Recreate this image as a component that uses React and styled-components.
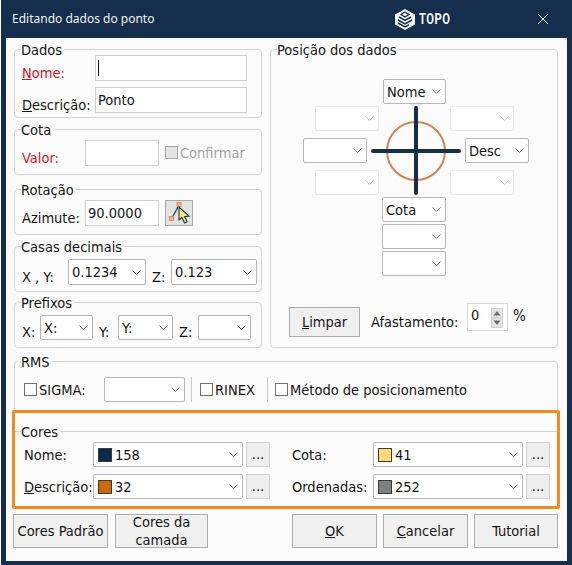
import React from "react";
import styled, { createGlobalStyle } from "styled-components";

const Global = createGlobalStyle`
  html, body { margin: 0; padding: 0; background: #fff; }
  body { font-family: "DejaVu Sans Condensed", "Noto Sans", "Liberation Sans", sans-serif; font-size: 14.5px; color: #151515; }
  * { box-sizing: border-box; }
`;

const Win = styled.div`
  width: 571px;
  height: 565px;
  margin-left: 1px;
  background: #162e4d;
  padding: 0 5px 4px 5px;
  display: flex;
  flex-direction: column;
  overflow: hidden;
`;

const TitleBar = styled.div`
  height: 38px;
  flex: none;
  display: flex;
  align-items: center;
  color: #eef1f4;
`;

const TitleText = styled.div`
  font-family: "Noto Sans", sans-serif;
  font-size: 12px;
  margin-left: 6px;
  width: 382px;
  padding-bottom: 1px;
`;

const LogoText = styled.div`
  font-family: "Roboto", sans-serif;
  font-weight: 700;
  font-size: 14px;
  letter-spacing: 0.6px;
  margin-left: 3px;
  width: 118px;
  color: #f2f4f6;
  transform: scaleX(0.8);
  transform-origin: left center;
`;

const Body = styled.div`
  flex: 1;
  background: #fbfbfb;
  padding: 11px 9px 0 8px;
`;

const Top = styled.div`
  display: flex;
  gap: 8px;
`;

const LeftCol = styled.div`
  width: 248px;
  display: flex;
  flex-direction: column;
`;

const Group = styled.div`
  position: relative;
  border: 1px solid #d4d4d4;
  border-radius: 4px;
  height: ${p => p.$h}px;
  margin-top: ${p => p.$mt || 0}px;
  padding: ${p => p.$pad};
`;

const Caption = styled.div`
  position: absolute;
  top: -9px;
  left: 6px;
  padding-right: 2px;
  background: #fbfbfb;
  line-height: 18px;
`;

const Row = styled.div`
  display: flex;
  align-items: flex-end;
  margin-top: ${p => p.$mt || 0}px;
`;

const Label = styled.div`
  width: ${p => p.$w}px;
  margin-left: ${p => p.$ml || 0}px;
  margin-bottom: -1px;
  flex: none;
  line-height: 18px;
  white-space: nowrap;
  color: ${p => (p.$red ? "#d3141c" : "inherit")};
`;

const Input = styled.div`
  width: ${p => p.$w}px;
  height: 26px;
  flex: none;
  background: #fff;
  border: 1px solid #cfcfcf;
  padding: 0 2px;
  line-height: 25px;
  white-space: nowrap;
`;

const Caret = styled.span`
  display: inline-block;
  width: 1px;
  height: 16px;
  margin-top: 4px;
  background: #111;
`;

const Box = styled.span`
  width: 13px;
  height: 13px;
  margin-top: -1px;
  flex: none;
  border: 1px solid ${p => (p.$off ? "#a8a8a8" : "#707070")};
  background: ${p => (p.$off ? "#e4e4e4" : "#fff")};
`;

const Check = styled.div`
  display: flex;
  align-items: center;
  gap: 2px;
  height: 25px;
  padding-top: 1px;
  flex: none;
  width: ${p => (p.$w ? `${p.$w}px` : "auto")};
  margin-left: ${p => p.$ml || 0}px;
  margin-bottom: ${p => p.$mb || 0}px;
  color: ${p => (p.$off ? "#a3a3a3" : "inherit")};
`;

const ComboBox = styled.div`
  width: ${p => p.$w}px;
  height: ${p => p.$h || 25}px;
  margin-left: ${p => p.$ml || 0}px;
  flex: none;
  display: flex;
  align-items: center;
  gap: 3px;
  background: #fff;
  border: 1px solid ${p => (p.$off ? "#e8e8e8" : "#b6b6b6")};
  border-radius: 2px;
  padding: 0 0 0 3px;
  overflow: hidden;
  grid-column: ${p => p.$col || "auto"};
  grid-row: ${p => p.$row || "auto"};
`;

const ComboText = styled.span`
  flex: 1;
  white-space: nowrap;
`;

const Swatch = styled.span`
  width: 14px;
  height: 14px;
  margin-left: 1px;
  flex: none;
  border: 1px solid #3a3a3a;
  background: ${p => p.$color};
`;

const Chevron = styled.svg`
  width: 9px;
  height: 5px;
  margin: 0 4px 0 0;
  flex: none;
  fill: none;
  stroke: ${p => (p.$off ? "#c4c4c4" : "#6f6f6f")};
  stroke-width: 1;
`;

const Combo = ({ text, color, off, ...rest }) => (
  <ComboBox $off={off} {...rest}>
    {color && <Swatch $color={color} />}
    <ComboText>{text}</ComboText>
    <Chevron $off={off} viewBox="0 0 9 5">
      <path d="M0.5 0.5 L4.5 4.5 L8.5 0.5" />
    </Chevron>
  </ComboBox>
);

const PickButton = styled.div`
  width: 28px;
  height: 26px;
  margin-left: 6px;
  flex: none;
  background: #e2e2e2;
  border: 1px solid #a8a8a8;
`;

const PositionGroup = styled(Group)`
  flex: 1;
  display: flex;
  flex-direction: column;
  padding: 29px 0 0 32px;
`;

const Dial = styled.div`
  display: grid;
  grid-template-columns: 12px 52px 12px 71px 15px 49px 15px;
  grid-template-rows: repeat(3, 25px);
  row-gap: 7px;
  margin-top: 2px;
`;

const Cross = styled.svg`
  grid-column: 3 / 6;
  grid-row: 1 / 4;
  width: 98px;
  height: 89px;
`;

const Stack = styled.div`
  display: flex;
  flex-direction: column;
  gap: 2px;
  margin: 2px 0 0 79px;
`;

const PositionFoot = styled.div`
  display: flex;
  align-items: flex-start;
  margin: 31px 0 0 -14px;
`;

const FootLabel = styled(Label)`
  margin-top: 6px;
`;

const Spin = styled.div`
  width: 41px;
  height: 28px;
  margin: -4px 0 0 8px;
  background: #fff;
  border: 1px solid #d8d8d8;
  display: flex;
  justify-content: space-between;
  padding: 0 4px 0 3px;
  line-height: 22px;
`;

const SpinArrows = styled.svg`
  width: 12px;
  height: 20px;
  margin-top: 4px;
`;

const PercentText = styled.div`
  margin: 0 0 0 5px;
  font-size: 15px;
  line-height: 18px;
`;

const Divider = styled.div`
  width: 1px;
  height: 25px;
  margin-left: ${p => p.$ml}px;
  flex: none;
  background: #c8c8c8;
`;

const RmsGroup = styled(Group)`
  border-bottom: none;
  border-radius: 4px 4px 0 0;
`;

const Highlight = styled.div`
  height: 99px;
  margin: 0 -2px;
  border: 3px solid #f28c1e;
  border-radius: 2px;
  padding-top: 18px;
`;

const CoresBody = styled.div`
  position: relative;
  border-top: 1px solid #d4d4d4;
  padding: 10px 0 0 9px;
`;

const CoresGrid = styled.div`
  display: grid;
  grid-template-columns: 246px 258px;
  column-gap: 22px;
  row-gap: 7px;
`;

const ColorField = styled.div`
  display: flex;
  align-items: center;
`;

const DotsButton = styled.div`
  width: 24px;
  height: 25px;
  margin-left: 3px;
  flex: none;
  background: #efefef;
  border: 1px solid #d2d2d2;
  text-align: center;
  line-height: 23px;
`;

const Actions = styled.div`
  display: flex;
  gap: 7px;
  margin: 5px 0 0 -1px;
  width: 545px;
`;

const ActionPair = styled.div`
  display: flex;
  gap: 6px;
  margin-left: auto;
`;

const Btn = styled.div`
  width: ${p => p.$w}px;
  height: ${p => p.$h || 34}px;
  flex: none;
  display: flex;
  align-items: center;
  justify-content: center;
  text-align: center;
  line-height: 18px;
  background: #f0f0f0;
  border: 1px solid #adadad;
`;

const colorFields = [
  { label: <span>Nome:</span>, w: 69, color: "#0b2a4c", text: "158" },
  { label: <span>Cota:</span>, w: 81, color: "#fdd778", text: "41" },
  { label: <span><u>D</u>escrição:</span>, w: 69, color: "#cc6a00", text: "32" },
  { label: <span>Ordenadas:</span>, w: 81, color: "#808080", text: "252" },
];

const Logo = () => (
  <svg width="22" height="23" viewBox="0 0 22 23" style={{ flex: "none" }}>
    <path d="M11 1 L21 6.5 L21 16.5 L11 22 L1 16.5 L1 6.5 Z" fill="#f4f5f6" />
    <path d="M11 4 L15 6.5 L11 9 L7 6.5 Z" fill="none" stroke="#162e4d" strokeWidth="1.3" />
    <path d="M5 9 L11 12.5 L17 9 M4 12 L11 16 L18 12 M4 15 L11 19 L15 16.8" fill="none" stroke="#162e4d" strokeWidth="1.5" />
  </svg>
);

const CloseIcon = () => (
  <svg width="12" height="12" viewBox="0 0 12 12" style={{ flex: "none" }}>
    <path d="M1 1 L11 11 M11 1 L1 11" stroke="#e8ecf0" strokeWidth="1" />
  </svg>
);

const PickIcon = () => (
  <svg width="26" height="24" viewBox="0 0 26 24">
    <path d="M6 17 L13 4" stroke="#33465c" strokeWidth="1.4" fill="none" />
    <rect x="3.5" y="15.5" width="4" height="4" fill="#f2b48c" stroke="#d98050" strokeWidth="0.8" />
    <rect x="11" y="1.5" width="4" height="4" fill="#f2b48c" stroke="#d98050" strokeWidth="0.8" />
    <path d="M13 6 L13 19 L16 16.5 L18.5 22 L21 20.8 L18.6 15.6 L23 15 Z" fill="#f0ee78" stroke="#24384f" strokeWidth="1.1" />
  </svg>
);

export default function App() {
  return (
    <>
      <Global />
      <Win>
        <TitleBar>
          <TitleText>Editando dados do ponto</TitleText>
          <Logo />
          <LogoText>TOPO</LogoText>
          <CloseIcon />
        </TitleBar>
        <Body>
          <Top>
            <LeftCol>
              <Group $h={69} $pad="5px 0 0 7px">
                <Caption>Dados</Caption>
                <Row>
                  <Label $w={73} $red><u>N</u>ome:</Label>
                  <Input $w={152}><Caret /></Input>
                </Row>
                <Row $mt={6}>
                  <Label $w={73}><u>D</u>escrição:</Label>
                  <Input $w={152}>Ponto</Input>
                </Row>
              </Group>
              <Group $h={46} $mt={11} $pad="10px 0 0 7px">
                <Caption>Cota</Caption>
                <Row>
                  <Label $w={63} $red>Valor:</Label>
                  <Input $w={74} />
                  <Check $ml={6} $off $mb={1}><Box $off />Confirmar</Check>
                </Row>
              </Group>
              <Group $h={46} $mt={14} $pad="10px 0 0 7px">
                <Caption>Rotação</Caption>
                <Row>
                  <Label $w={63}>Azimute:</Label>
                  <Input $w={74}>90.0000</Input>
                  <PickButton><PickIcon /></PickButton>
                </Row>
              </Group>
              <Group $h={46} $mt={11} $pad="12px 0 0 7px">
                <Caption>Casas decimais</Caption>
                <Row>
                  <Label $w={46}>X , Y:</Label>
                  <Combo $w={78} $h={26} text="0.1234" />
                  <Label $w={19} $ml={6}>Z:</Label>
                  <Combo $w={86} $h={26} text="0.123" />
                </Row>
              </Group>
              <Group $h={46} $mt={10} $pad="12px 0 0 7px">
                <Caption>Prefixos</Caption>
                <Row>
                  <Label $w={18}>X:</Label>
                  <Combo $w={53} text="X:" />
                  <Label $w={19} $ml={6}>Y:</Label>
                  <Combo $w={55} text="Y:" />
                  <Label $w={19} $ml={6}>Z:</Label>
                  <Combo $w={53} text="" />
                </Row>
              </Group>
            </LeftCol>
            <PositionGroup $h={299}>
              <Caption>Posição dos dados</Caption>
              <Combo $w={63} $ml={80} text="Nome" />
              <Dial>
                <Cross viewBox="0 0 98 89">
                  <circle cx="49" cy="45" r="29" fill="none" stroke="#d08355" strokeWidth="2" />
                  <path d="M49 2 L49 87 M6 45 L92 45" stroke="#162e4d" strokeWidth="4" strokeLinecap="round" />
                </Cross>
                <Combo $w={64} $col="2 / 4" $row="1" text="" off />
                <Combo $w={64} $col="5 / 7" $row="1" text="" off />
                <Combo $w={64} $col="1 / 3" $row="2" text="" />
                <Combo $w={64} $col="6 / 8" $row="2" text="Desc" />
                <Combo $w={64} $col="2 / 4" $row="3" text="" off />
                <Combo $w={64} $col="5 / 7" $row="3" text="" off />
              </Dial>
              <Stack>
                <Combo $w={64} text="Cota" />
                <Combo $w={64} text="" />
                <Combo $w={64} text="" />
              </Stack>
              <PositionFoot>
                <Btn $w={71} $h={30}><span><u>L</u>impar</span></Btn>
                <FootLabel $w={88} $ml={11}>Afastamento:</FootLabel>
                <Spin>
                  0
                  <SpinArrows viewBox="0 0 12 20">
                    <rect x="0.5" y="0.5" width="11" height="9.5" fill="#e3e3e3" stroke="#cfcfcf" />
                    <rect x="0.5" y="10" width="11" height="9.5" fill="#e3e3e3" stroke="#cfcfcf" />
                    <path d="M2.5 7.5 L6 3 L9.5 7.5 Z M2.5 12.5 L6 17 L9.5 12.5 Z" fill="#6d6d6d" />
                  </SpinArrows>
                </Spin>
                <PercentText>%</PercentText>
              </PositionFoot>
            </PositionGroup>
          </Top>
          <RmsGroup $h={49} $mt={13} $pad="15px 0 0 9px">
            <Caption>RMS</Caption>
            <Row>
              <Check $w={80}><Box />SIGMA:</Check>
              <Combo $w={81} text="" />
              <Divider $ml={6} />
              <Check $w={67} $ml={8}><Box />RINEX</Check>
              <Divider $ml={0} />
              <Check $ml={7}><Box />Método de posicionamento</Check>
            </Row>
          </RmsGroup>
          <Highlight>
            <CoresBody>
              <Caption>Cores</Caption>
              <CoresGrid>
                {colorFields.map((f, i) => (
                  <ColorField key={i}>
                    <Label $w={f.w}>{f.label}</Label>
                    <Combo $w={150} color={f.color} text={f.text} />
                    <DotsButton>...</DotsButton>
                  </ColorField>
                ))}
              </CoresGrid>
            </CoresBody>
          </Highlight>
          <Actions>
            <Btn $w={95}>Cores Padrão</Btn>
            <Btn $w={93}>Cores da camada</Btn>
            <ActionPair>
              <Btn $w={85}><span><u>O</u>K</span></Btn>
              <Btn $w={85}><span><u>C</u>ancelar</span></Btn>
              <Btn $w={84}>Tutorial</Btn>
            </ActionPair>
          </Actions>
        </Body>
      </Win>
    </>
  );
}
